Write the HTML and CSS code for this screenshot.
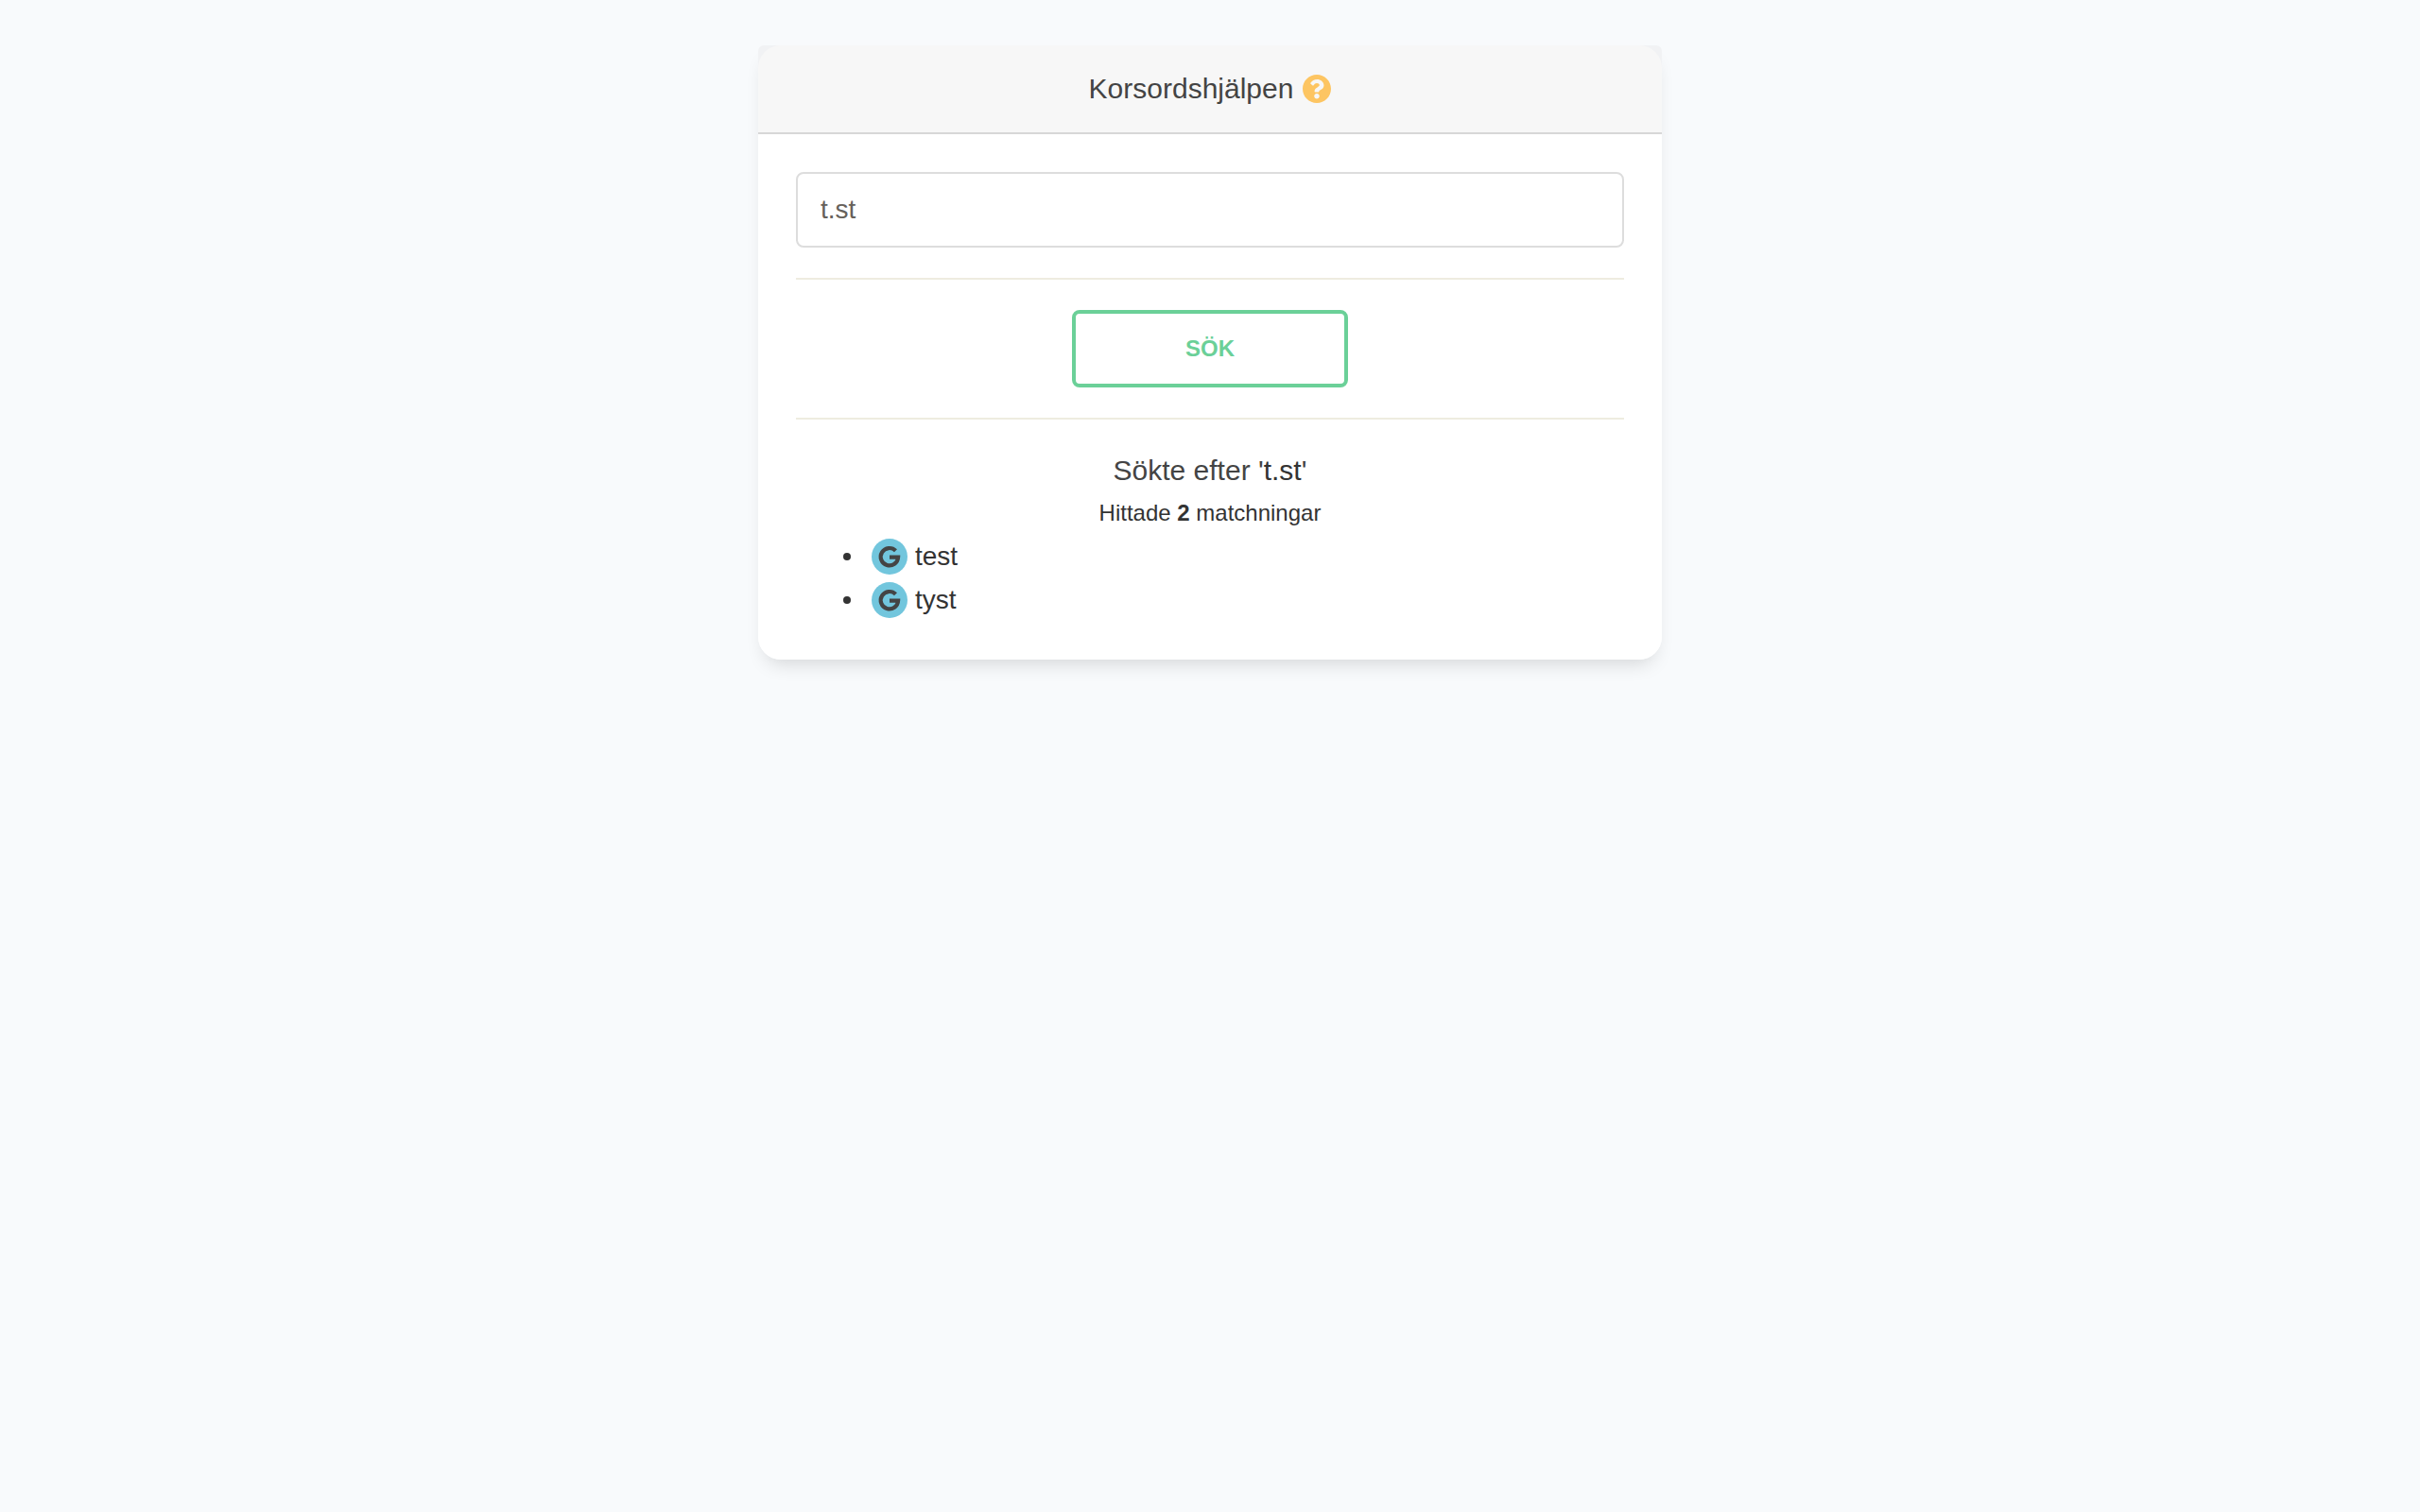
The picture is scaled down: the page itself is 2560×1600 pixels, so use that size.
FILE: index.html
```html
<!DOCTYPE html>
<html lang="sv"><head><meta charset="utf-8"><title>Korsordshjälpen</title><link rel="stylesheet" href="styles.css"></head>
<body>
<main class="card">
  <header class="card-header">
    <h1 class="title">Korsordshjälpen</h1>
    <button class="help" type="button" aria-label="Hjälp">
      <svg viewBox="8 8 496 496" aria-hidden="true"><path fill="currentColor" d="M504 256c0 136.997-111.043 248-248 248S8 392.997 8 256C8 119.083 119.043 8 256 8s248 111.083 248 248zM262.655 90c-54.497 0-89.255 22.957-116.549 63.758-3.536 5.286-2.353 12.415 2.715 16.258l34.699 26.31c5.205 3.947 12.621 3.008 16.665-2.122 17.864-22.658 30.113-35.797 57.303-35.797 20.429 0 45.698 13.148 45.698 32.958 0 14.976-12.363 22.667-32.534 33.976C247.128 238.528 216 254.941 216 296v4c0 6.627 5.373 12 12 12h56c6.627 0 12-5.373 12-12v-1.333c0-28.462 83.186-29.647 83.186-106.667 0-58.002-60.165-102-116.531-102zM256 338c-25.365 0-46 20.635-46 46 0 25.364 20.635 46 46 46s46-20.636 46-46c0-25.365-20.635-46-46-46z"/></svg>
    </button>
  </header>
  <div class="card-body">
    <form class="search">
      <input class="field" type="text" value="t.st" aria-label="Sökord">
      <hr class="rule">
      <button class="submit" type="submit">SÖK</button>
      <hr class="rule">
    </form>
    <section class="results">
      <h2 class="query">Sökte efter '<b>t.st</b>'</h2>
      <p class="count">Hittade <strong>2</strong> matchningar</p>
      <ul class="matches">
        <li class="match"><a class="word" href="#test"><svg class="badge" viewBox="0 0 38 38" aria-hidden="true"><circle cx="19" cy="19" r="19" fill="#72c6dd"/><path d="M25.500 12.800A9.200 9.200 0 1 0 28.100 19.700H19" fill="none" stroke="#444" stroke-width="4.200"/></svg>test</a></li>
        <li class="match"><a class="word" href="#tyst"><svg class="badge" viewBox="0 0 38 38" aria-hidden="true"><circle cx="19" cy="19" r="19" fill="#72c6dd"/><path d="M25.500 12.800A9.200 9.200 0 1 0 28.100 19.700H19" fill="none" stroke="#444" stroke-width="4.200"/></svg>tyst</a></li>
      </ul>
    </section>
  </div>
</main>
</body></html>
```
FILE: styles.css
```css
* { box-sizing: border-box; }
body {
  margin: 0;
  padding: 48px 24px;
  min-height: 100vh;
  background: #f8fafc;
  color: #333;
  font-family: "Liberation Sans", Arial, sans-serif;
}
.card {
  max-width: 956px;
  margin: 0 auto;
  background: linear-gradient(#f1f2f4 50%, transparent 50%);
  border-radius: 6px 6px 24px 24px;
  box-shadow: 0 12px 20px -8px rgba(0, 0, 0, 0.15);
}
.card-header {
  display: flex;
  align-items: center;
  justify-content: center;
  gap: 10px;
  padding: 24px;
  background: #f7f7f7;
  border-bottom: 2px solid #d7d7d7;
  border-radius: 24px 24px 0 0;
}
.title, .query { margin: 0; color: #444; font-size: 30px; font-weight: 300; line-height: 44px; }
.help { width: 30px; height: 30px; padding: 0; border: 0; background: none; color: #fdc562; }
.help svg { display: block; }
.card-body { padding: 40px; background: #fff; border-radius: 0 0 24px 24px; }
.field {
  display: block;
  width: 100%;
  height: 80px;
  padding: 0 24px;
  border: 2px solid #ddd;
  border-radius: 8px;
  background: #fff;
  color: #66615b;
  font: 28px "Liberation Sans", Arial, sans-serif;
}
.rule { margin: 32px 0; border: 0; border-top: 2px solid #eeece0; }
.submit {
  display: block;
  width: 292px;
  height: 82px;
  margin: 0 auto;
  border: 4px solid #6bd098;
  border-radius: 8px;
  background: transparent;
  color: #6bd098;
  font: bold 24px "Liberation Sans", Arial, sans-serif;
}
.query { text-align: center; }
.query b { color: #333; font-weight: 400; }
.count { margin: 0; text-align: center; font-size: 24px; line-height: 46px; }
.matches { margin: 0; padding-left: 50px; list-style: none; font-size: 28px; line-height: 46px; }
.match { display: flex; align-items: center; gap: 22px; }
.match::before { content: ""; width: 8px; height: 8px; border-radius: 50%; background: #333; }
.word { display: flex; align-items: center; gap: 8px; color: inherit; text-decoration: none; }
.badge { width: 38px; height: 38px; }
```
